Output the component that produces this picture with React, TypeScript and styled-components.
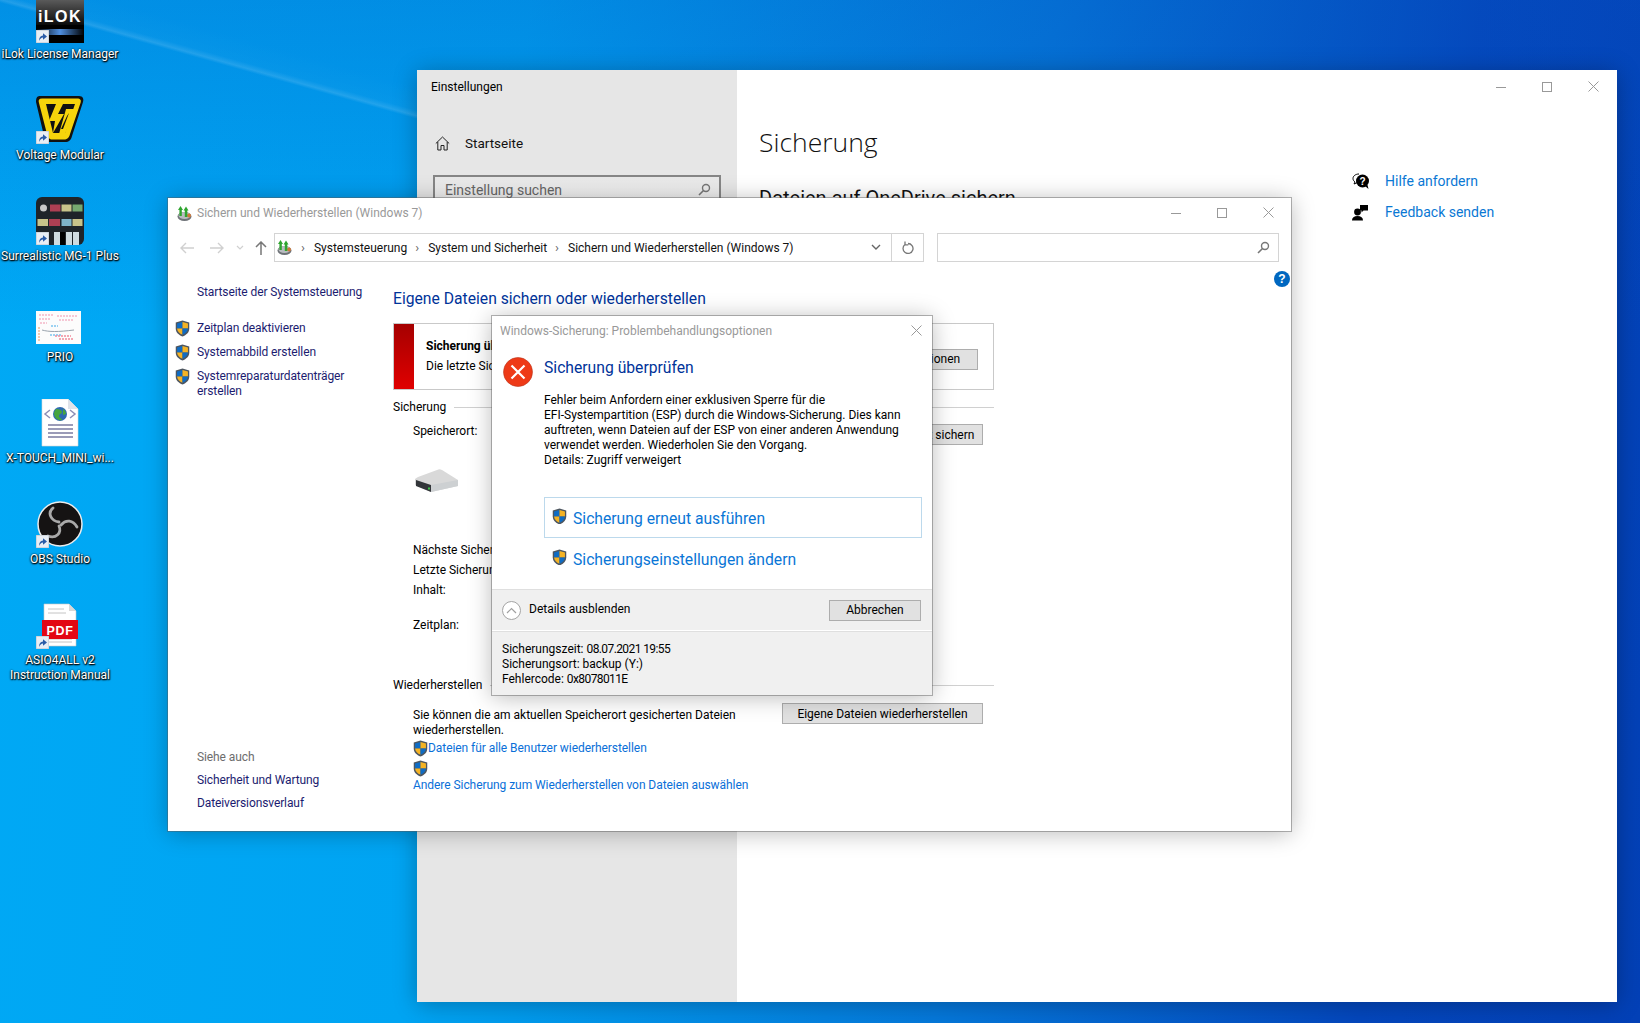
import React from "react";
import styled, { createGlobalStyle } from "styled-components";

const UI_FONT = `Roboto, "Noto Sans", "Liberation Sans", sans-serif`;

const GlobalStyle = createGlobalStyle`
  html, body {
    margin: 0;
    padding: 0;
    height: 100%;
    overflow: hidden;
  }
  body {
    font-family: ${UI_FONT};
    font-size: 12px;
    color: #000;
  }
  * { box-sizing: border-box; }
`;

/* ---------- small drawings ---------- */

const Shield = ({ size = 15 }: { size?: number }) => (
  <svg width={size} height={size * 1.13} viewBox="0 0 16 18">
    <path d="M8 .5 15.2 2.6V9c0 4.2-3.2 7-7.2 8.5C4 16 .8 13.200.8 9V2.600Z" fill="#4d5660" />
    <path d="M8 2 8 9H2.200V3.700Z" fill="#0f6cc4" />
    <path d="M8 2 13.800 3.700V9H8Z" fill="#f5b324" />
    <path d="M8 9H2.200C2.400 12 4.800 14.500 8 15.800Z" fill="#f5b324" />
    <path d="M8 9h5.800C13.600 12 11.200 14.500 8 15.800Z" fill="#0f6cc4" />
  </svg>
);

const BackupIcon = () => (
  <svg width="17" height="17" viewBox="0 0 17 17">
    <ellipse cx="8.500" cy="11.500" rx="7" ry="4.500" fill="#6f7378" />
    <ellipse cx="8.500" cy="10.500" rx="6" ry="3.500" fill="#b9bcc0" />
    <circle cx="13" cy="10.500" r="2" fill="#d0783a" />
    <path d="M4.500 1 7 5H5.800v6H3.400V5H2ZM10 1.500l2.500 4h-1.200V12H8.800V5.500H7.500Z" fill="#2fa52f" />
  </svg>
);

const ShortcutBadge = () => (
  <Badge>
    <svg width="13" height="13" viewBox="0 0 13 13">
      <rect width="13" height="13" fill="#e8eef5" stroke="#b8bfc8" />
      <path d="M3 11C3 7.500 4.500 5.800 7 5.500V3.200L11 6.500 7 9.800V7.500C5.300 7.600 4 8.800 3 11Z" fill="#2a5ca8" />
    </svg>
  </Badge>
);

const ILokIcon = () => (
  <svg width="48" height="48" viewBox="0 0 48 48">
    <defs>
      <linearGradient id="ilokTop" x1="0" x2="0" y1="0" y2="1">
        <stop offset="0" stopColor="#6a6a6a" />
        <stop offset="1" stopColor="#0a0a0a" />
      </linearGradient>
      <linearGradient id="ilokBar" x1="0" x2="1" y1="0" y2="0">
        <stop offset="0" stopColor="#000" />
        <stop offset=".5" stopColor="#4f8fe0" />
        <stop offset="1" stopColor="#000" />
      </linearGradient>
    </defs>
    <rect width="48" height="48" fill="#000" />
    <rect width="48" height="30" fill="url(#ilokTop)" />
    <text x="24" y="27" textAnchor="middle" fontFamily="Liberation Sans" fontWeight="700" fontSize="16" fill="#fff" letterSpacing="1.500">iLOK</text>
    <rect y="34" width="48" height="6" fill="url(#ilokBar)" />
  </svg>
);

const VoltageIcon = () => (
  <svg width="48" height="48" viewBox="0 0 48 48">
    <path d="M4 0H43C47 0 48 3 47 6L36 40C35 44 33 46 29 46H14C10 46 9 44 8 40L0 6C0 2 1 0 4 0Z" fill="#111" />
    <path d="M6 2.500H41C44.500 2.500 45.500 4 44.500 7L34 38C33 42 31 43.500 28 43.500H16C13 43.500 12 41 11 38L3 7C2 4 3 2.500 6 2.500Z" fill="#f6d40b" />
    <path d="M10 8H39L29 37H17Z" fill="#111" />
    <path d="M20 8 13 25H19L17 37 28 18H22L27 8Z" fill="#f6d40b" />
    <path d="M30 13H39L29 38H23Z" fill="#f6d40b" />
    <path d="M31 20 33 17 27 33 25 33Z" fill="#111" />
  </svg>
);

const MgIcon = () => (
  <svg width="48" height="48" viewBox="0 0 48 48">
    <rect width="48" height="48" rx="6" fill="#1f2429" />
    <circle cx="7.500" cy="11" r="3.500" fill="#c8c8c8" />
    <rect x="14" y="7.500" width="10.500" height="7" fill="#ad3f53" />
    <rect x="25.500" y="7.500" width="10" height="7" fill="#c8c38a" />
    <rect x="36.500" y="7.500" width="10" height="7" fill="#76a86f" />
    <rect x="1.500" y="22" width="10.500" height="7" fill="#c8c38a" />
    <rect x="13" y="22" width="11" height="7" fill="#ad3f53" />
    <rect x="25.500" y="22" width="10" height="7" fill="#7fb4c8" />
    <rect x="36.500" y="22" width="10" height="7" fill="#c8c38a" />
    <rect x="18" y="35" width="6" height="13" fill="#cfdbe0" />
    <rect x="24" y="35" width="5" height="13" fill="#000" />
    <rect x="30" y="35" width="6" height="13" fill="#cfdbe0" />
    <rect x="37" y="35" width="6" height="13" fill="#cfdbe0" />
  </svg>
);

const PrioIcon = () => (
  <svg width="48" height="48" viewBox="0 0 48 48">
    <g transform="translate(-1 7)">
      <rect x="1" y="6" width="45" height="33" fill="#fcfcfc" />
      <path d="M4 10h15M4 14h11M5 18h7M22 11h21M24 15h15" stroke="#f4b6c8" strokeWidth="1.500" strokeDasharray="2 1" />
      <path d="M7 25c7 2 16 2 32 0" stroke="#9aa3ad" fill="none" />
      <path d="M16 21h7M15 30h12" stroke="#7cc4ee" strokeWidth="1.500" strokeDasharray="2 1" />
      <path d="M20 31h16M24 34h14" stroke="#f08a9c" strokeWidth="1.500" strokeDasharray="2 1" />
      <path d="M4 22v14" stroke="#f3cbb0" strokeWidth="2" strokeDasharray="2 1" />
    </g>
  </svg>
);

const HtmlIcon = () => (
  <svg width="48" height="48" viewBox="1 0 48 48">
    <path d="M7 0H33L43 10V47H7Z" fill="#fff" stroke="#d8d8d8" strokeWidth=".6" />
    <path d="M33 0V10H43Z" fill="#dfe3ea" />
    <circle cx="25" cy="15" r="7" fill="#2f6bb0" />
    <path d="M21 10c3 0 6 1 6 3s-3 2-3 4 3 2 3 4c-3 1-7-1-8-6 0-2 1-4 2-5ZM28 10c2 1 3 3 3 5l-3 1Z" fill="#46a53f" />
    <path d="M15 11 10 15l5 4M35 11l5 4-5 4" fill="none" stroke="#8d8fb5" strokeWidth="1.500" />
    <path d="M13 26h25M13 30h25M13 34h25M13 38h25" stroke="#9a9bb8" strokeWidth="2" />
  </svg>
);

const ObsIcon = () => (
  <svg width="48" height="48" viewBox="0 0 48 48">
    <circle cx="24" cy="24" r="22" fill="#151313" stroke="#ececec" strokeWidth="1.500" />
    <g fill="none" stroke="#a9a9a9" strokeLinecap="round">
      <path d="M17 8C11 13 15 21 23 22" strokeWidth="2.800" />
      <path d="M41 27C37 20 30 19 25 25" strokeWidth="2.800" />
      <path d="M12 36C20 39 26 33 23 26" strokeWidth="2.800" />
    </g>
  </svg>
);

const PdfIcon = () => (
  <svg width="48" height="48" viewBox="0 0 48 48">
    <g transform="translate(0 3)">
      <path d="M8 0H33L40 7V42H8Z" fill="#fff" stroke="#c8c8c8" strokeWidth=".6" />
      <path d="M33 0V7H40Z" fill="#d8d8d8" />
      <path d="M12 5H28M12 9H30M12 38H36M12 35H36" stroke="#c4c4c4" />
      <rect x="6" y="16" width="36" height="19" fill="#e30613" />
      <text x="24" y="30.500" textAnchor="middle" fontFamily="Liberation Sans" fontWeight="700" fontSize="12.500" fill="#fff" letterSpacing=".6">PDF</text>
    </g>
  </svg>
);

const DriveIcon = () => (
  <svg width="44" height="24" viewBox="0 0 44 24">
    <path d="M0 10 3 8 22 1C24 0 25 0 27 1L43 11V17L16 23 0 16Z" fill="#d9d9d9" />
    <path d="M1 11 16 16V23L1 17Z" fill="#33363a" />
    <path d="M16 16 43 11V17L16 23Z" fill="#cdd0d2" />
    <rect x="13" y="18.500" width="2" height="2" fill="#3fc44a" />
  </svg>
);

const ErrorIcon = () => (
  <svg width="30" height="30" viewBox="0 0 30 30">
    <circle cx="15" cy="15" r="14.500" fill="#ee3a17" stroke="#b9361f" strokeWidth=".6" />
    <path d="M8.500 8.500 21.500 21.500M21.500 8.500 8.500 21.500" stroke="#fff" strokeWidth="2.200" />
  </svg>
);

const CloseGlyph = () => (
  <svg width="11" height="11" viewBox="0 0 11 11">
    <path d="M.5.5 10.500 10.500M10.500.5.5 10.500" stroke="#999" fill="none" />
  </svg>
);

const MaxGlyph = () => (
  <svg width="10" height="10" viewBox="0 0 10 10">
    <rect x=".5" y=".5" width="9" height="9" stroke="#999" fill="none" />
  </svg>
);

const MinGlyph = () => (
  <svg width="10" height="10" viewBox="0 0 10 10">
    <path d="M0 5.500H10" stroke="#999" />
  </svg>
);

const SearchGlyph = ({ color }: { color: string }) => (
  <svg width="13" height="13" viewBox="0 0 13 13">
    <circle cx="8" cy="5" r="3.500" fill="none" stroke={color} strokeWidth="1.400" />
    <path d="M5.500 7.500 1 12" stroke={color} strokeWidth="1.600" />
  </svg>
);

const HomeGlyph = () => (
  <svg width="15" height="15" viewBox="0 0 15 15">
    <path d="M.8 7.500 7.500 1 14.200 7.500M2.800 6V14H6V9.500H9V14H12.200V6" fill="none" stroke="#222" />
  </svg>
);

const HelpChatGlyph = () => (
  <svg width="18" height="17" viewBox="0 0 18 17">
    <path d="M7 1C3.500 1 1 3 1 5.500 1 7 1.800 8 3 9L2 11l3-1.300" fill="#fff" stroke="#000" />
    <circle cx="10.500" cy="8" r="6.500" fill="#000" />
    <path d="M13 13l3.500 3-1-4Z" fill="#000" />
    <text x="10.500" y="11.500" textAnchor="middle" fontFamily="Liberation Sans" fontWeight="700" fontSize="10" fill="#fff">?</text>
  </svg>
);

const FeedbackGlyph = () => (
  <svg width="16" height="17" viewBox="0 0 16 17">
    <circle cx="5.500" cy="8" r="3.400" fill="#000" />
    <path d="M0 16.500C0 13.500 2 12 5.500 12S11 13.500 11 16.500Z" fill="#000" />
    <path d="M8 1H16V6.500H11.500L9.500 8.500V6.500H8Z" fill="#000" />
  </svg>
);

/* ---------- desktop ---------- */

const Desktop = styled.div`
  position: relative;
  width: 1640px;
  height: 1023px;
  overflow: hidden;
  background:
    linear-gradient(15.6deg, transparent 51.5%, rgba(255, 255, 255, 0.13) 52.8%, rgba(255, 255, 255, 0.02) 55%, transparent 65%) 0 0 / 420px 130px no-repeat,
    linear-gradient(180deg, rgba(5, 80, 190, 0.28) 0%, rgba(5, 80, 190, 0) 32%),
    linear-gradient(97deg, #00a9f5 0%, #00a4f2 30%, #0578da 60%, #0447bd 84%, #0340b6 100%);
`;

const IconColumn = styled.div`
  display: flex;
  flex-direction: column;
  width: 120px;
  margin-top: -5px;
`;

const IconCell = styled.div`
  height: 101px;
  display: flex;
  flex-direction: column;
  align-items: center;
`;

const IconArt = styled.div`
  position: relative;
  width: 48px;
  height: 48px;
  svg {
    display: block;
  }
`;

const Badge = styled.div`
  position: absolute;
  left: 0;
  bottom: 0;
  width: 13px;
  height: 13px;
`;

const IconLabel = styled.div`
  margin-top: 4px;
  color: #fff;
  font-size: 12px;
  line-height: 15px;
  text-align: center;
  white-space: nowrap;
  text-shadow: 0 1px 2px #000, 1px 1px 1px rgba(0, 0, 0, 0.8), 0 0 2px rgba(0, 0, 0, 0.8);
`;

/* ---------- windows ---------- */

const Window = styled.div<{ $x: number; $y: number; $w: number; $h: number; $z: number; $edge?: boolean }>`
  position: absolute;
  left: ${(p) => p.$x}px;
  top: ${(p) => p.$y}px;
  width: ${(p) => p.$w}px;
  height: ${(p) => p.$h}px;
  z-index: ${(p) => p.$z};
  background: #fff;
  box-shadow: ${(p) => (p.$edge ? "0 0 0 1px rgba(90, 90, 90, 0.45)," : "")} 0 2px 22px rgba(0, 0, 0, 0.28);
  overflow: hidden;
`;

const Controls = styled.div<{ $gap: number; $top: number; $right: number }>`
  position: absolute;
  top: ${(p) => p.$top}px;
  right: ${(p) => p.$right}px;
  display: flex;
  align-items: center;
  gap: ${(p) => p.$gap}px;
  svg {
    display: block;
  }
`;

/* settings window */

const SettingsBody = styled.div`
  display: flex;
  height: 100%;
`;

const SettingsNav = styled.div`
  width: 320px;
  height: 100%;
  background: #e6e6e6;
  padding: 9px 16px 0 14px;
`;

const SettingsTitle = styled.div`
  font-size: 12px;
  line-height: 16px;
`;

const HomeRow = styled.div`
  display: flex;
  align-items: center;
  gap: 15px;
  margin: 38px 0 0 4px;
  font-size: 13.5px;
  line-height: 20px;
  color: #111;
`;

const SettingsSearch = styled.div`
  margin: 22px 0 0 2px;
  height: 32px;
  border: 2px solid #868686;
  background: linear-gradient(#e8e8e8, #f2f2f2);
  display: flex;
  align-items: center;
  justify-content: space-between;
  padding: 0 8px 3px 10px;
  font-size: 14px;
  color: #666;
`;

const SettingsMain = styled.div`
  flex: 1;
  padding: 51px 0 0 22px;
  display: flex;
  gap: 0;
`;

const SettingsColumn = styled.div`
  width: 593px;
`;

const PageTitle = styled.div`
  font-size: 26.5px;
  line-height: 42px;
  font-weight: 300;
  color: #111;
  font-family: "Open Sans", "Noto Sans", sans-serif;
`;

const SubTitle = styled.div`
  margin-top: 22px;
  font-size: 20px;
  line-height: 26px;
  color: #111;
`;

const RelatedList = styled.div`
  margin-top: 50px;
  display: flex;
  flex-direction: column;
  gap: 11px;
`;

const RelatedLink = styled.div`
  display: flex;
  align-items: center;
  font-size: 14px;
  line-height: 20px;
  color: #0a78d4;
`;

const RelatedIcon = styled.div`
  width: 33px;
  svg {
    display: block;
  }
`;

/* control panel window */

const PanelTitleBar = styled.div`
  display: flex;
  align-items: center;
  gap: 4px;
  height: 30px;
  padding: 0 0 0 8px;
  color: #999;
`;

const NavRow = styled.div`
  display: flex;
  align-items: center;
  height: 29px;
  margin-top: 5px;
  padding-left: 12px;
`;

const NavGlyph = styled.div<{ $w: number; $tone: string }>`
  width: ${(p) => p.$w}px;
  color: ${(p) => p.$tone};
  svg {
    display: block;
  }
`;

const AddressBox = styled.div`
  margin-left: 6px;
  width: 650px;
  height: 29px;
  border: 1px solid #d4d4d4;
  display: flex;
  align-items: center;
  padding-left: 1px;
  color: #111;
`;

const Crumb = styled.span`
  margin-left: 8px;
  white-space: nowrap;
  &::before {
    content: "›";
    color: #666;
    margin-right: 9px;
    font-size: 13px;
  }
`;

const AddressEnd = styled.div`
  margin-left: auto;
  display: flex;
  align-items: center;
  height: 100%;
`;

const ChevronCell = styled.div`
  width: 30px;
  display: flex;
  justify-content: center;
`;

const RefreshCell = styled.div`
  width: 32px;
  height: 100%;
  border-left: 1px solid #d4d4d4;
  display: flex;
  align-items: center;
  justify-content: center;
`;

const SearchBox = styled.div`
  margin-left: 13px;
  width: 342px;
  height: 29px;
  border: 1px solid #d4d4d4;
  display: flex;
  align-items: center;
  justify-content: flex-end;
  padding-right: 8px;
`;

const HelpDot = styled.div`
  position: absolute;
  top: 73px;
  right: 1px;
  width: 16px;
  height: 16px;
  border-radius: 50%;
  background: #0067c0;
  color: #fff;
  font: 700 12px/16px "Liberation Sans", sans-serif;
  text-align: center;
`;

const PanelBody = styled.div`
  display: grid;
  grid-template-columns: 225px 1fr;
`;

const SideNav = styled.div`
  padding: 23px 0 0 7px;
  color: #1c1c70;
  line-height: 15px;
  letter-spacing: -0.1px;
`;

const SideText = styled.div`
  margin-left: 22px;
`;

const SideTask = styled.div<{ $top: number }>`
  display: flex;
  align-items: flex-start;
  gap: 7px;
  margin-top: ${(p) => p.$top}px;
  svg {
    display: block;
    flex: none;
    margin-top: -1px;
  }
`;

const SideGroup = styled.div<{ $top: number; $muted?: boolean }>`
  margin: ${(p) => p.$top}px 0 0 22px;
  color: ${(p) => (p.$muted ? "#6d6d6d" : "#1c1c70")};
`;

const MainPane = styled.div`
  padding: 27px 0 0 0;
  width: 601px;
`;

const MainHeading = styled.div`
  color: #003399;
  font-size: 15.7px;
  line-height: 20px;
`;

const AlertBox = styled.div`
  margin-top: 14px;
  height: 67px;
  border: 1px solid #c9c9c9;
  display: flex;
  align-items: stretch;
`;

const AlertStripe = styled.div`
  width: 20px;
  background: linear-gradient(#a50000, #e00000);
`;

const AlertText = styled.div`
  padding: 12px 0 0 12px;
  line-height: 20px;
  flex: 1;
`;

const AlertTitle = styled.div`
  font-weight: 700;
`;

const GreyButton = styled.button<{ $w: number; $top?: number }>`
  width: ${(p) => p.$w}px;
  height: 21px;
  margin-top: ${(p) => p.$top ?? 0}px;
  padding: 0;
  border: 1px solid #adadad;
  background: #e1e1e1;
  color: #000;
  font: inherit;
  line-height: 18px;
`;

const AlertAction = styled.div`
  align-self: center;
  padding-right: 15px;
`;

const SectionHead = styled.div<{ $top: number }>`
  margin-top: ${(p) => p.$top}px;
  display: flex;
  align-items: center;
  gap: 8px;
  line-height: 16px;
  &::after {
    content: "";
    flex: 1;
    border-top: 1px solid #d0d0d0;
  }
`;

const SectionRow = styled.div`
  display: flex;
  justify-content: space-between;
  align-items: flex-start;
  padding: 8px 11px 0 20px;
  line-height: 16px;
`;

const Field = styled.div<{ $top: number }>`
  margin: ${(p) => p.$top}px 0 0 20px;
  line-height: 15px;
`;

const DriveSlot = styled.div`
  margin: 24px 0 0 22px;
  height: 27px;
  svg {
    display: block;
  }
`;

const RestoreRow = styled.div`
  display: flex;
  justify-content: space-between;
  align-items: flex-start;
  padding: 15px 11px 0 20px;
`;

const RestoreText = styled.div`
  width: 340px;
  line-height: 15px;
`;

const LinkLine = styled.div<{ $top: number }>`
  margin-top: ${(p) => p.$top}px;
  display: flex;
  align-items: center;
  color: #0a6fd8;
  line-height: 15px;
  letter-spacing: -0.06px;
  white-space: nowrap;
  svg {
    display: block;
  }
`;

const ShieldAlone = styled.div`
  margin: 3px 0 0 0;
  height: 17px;
  svg {
    display: block;
  }
`;

/* dialog */

const DialogTitle = styled.div`
  height: 30px;
  padding: 8px 0 0 8px;
  color: #999;
  line-height: 15px;
`;

const DialogHeadRow = styled.div`
  display: flex;
  gap: 11px;
  padding: 11px 0 0 11px;
  svg {
    display: block;
  }
`;

const DialogHeadText = styled.div`
  color: #003399;
  font-size: 15.7px;
  line-height: 20px;
  margin-top: 1px;
`;

const DialogText = styled.div`
  margin: 6px 0 0 52px;
  line-height: 15px;
  white-space: nowrap;
`;

const CommandLink = styled.div<{ $top: number; $framed?: boolean }>`
  margin: ${(p) => p.$top}px 10px 0 52px;
  height: 41px;
  display: flex;
  align-items: center;
  gap: 6px;
  padding-left: 7px;
  border: 1px solid ${(p) => (p.$framed ? "#bcd9ec" : "transparent")};
  color: #0a76d6;
  font-size: 15.7px;
  line-height: 21px;
  svg {
    display: block;
    margin-top: -3px;
  }
`;

const CommandLabel = styled.span`
  margin-top: 1px;
`;

const DialogFooter = styled.div`
  position: absolute;
  left: 0;
  right: 0;
  bottom: 0;
  height: 106px;
  background: #f0f0f0;
  border-top: 1px solid #dfdfdf;
`;

const FooterRow = styled.div`
  height: 41px;
  display: flex;
  align-items: center;
  padding: 0 11px 0 10px;
  border-bottom: 1px solid #fff;
  box-shadow: 0 1px 0 #dfdfdf;
  gap: 8px;
`;

const ChevronCircle = styled.div`
  width: 19px;
  height: 19px;
  border-radius: 50%;
  border: 1px solid #a4a4a4;
  background: #fff;
  display: flex;
  align-items: center;
  justify-content: center;
  svg {
    display: block;
  }
`;

const FooterLabel = styled.span`
  margin-top: -2px;
`;

const FooterAction = styled.div`
  margin-left: auto;
`;

const FooterDetails = styled.div`
  padding: 11px 0 0 10px;
  line-height: 15px;
`;

const Digits = styled.span`
  letter-spacing: -0.6px;
`;

const desktopIcons = [
  { art: <ILokIcon />, name: "iLok License Manager", link: true },
  { art: <VoltageIcon />, name: "Voltage Modular", link: true },
  { art: <MgIcon />, name: "Surrealistic MG-1 Plus", link: true },
  { art: <PrioIcon />, name: "PRIO", link: false },
  { art: <HtmlIcon />, name: "X-TOUCH_MINI_wi...", link: false },
  { art: <ObsIcon />, name: "OBS Studio", link: true },
  { art: <PdfIcon />, name: "ASIO4ALL v2\nInstruction Manual", link: true },
];

const WindowButtons = ({ gap, top, right }: { gap: number; top: number; right: number }) => (
  <Controls $gap={gap} $top={top} $right={right}>
    <MinGlyph />
    <MaxGlyph />
    <CloseGlyph />
  </Controls>
);

const App = () => {
  return (
    <Desktop>
      <GlobalStyle />

      <IconColumn>
        {desktopIcons.map((icon) => (
          <IconCell key={icon.name}>
            <IconArt>
              {icon.art}
              {icon.link && <ShortcutBadge />}
            </IconArt>
            <IconLabel>
              {icon.name.split("\n").map((line) => (
                <div key={line}>{line}</div>
              ))}
            </IconLabel>
          </IconCell>
        ))}
      </IconColumn>

      <Window $x={417} $y={70} $w={1200} $h={932} $z={1}>
        <WindowButtons gap={36} top={11} right={18} />
        <SettingsBody>
          <SettingsNav>
            <SettingsTitle>Einstellungen</SettingsTitle>
            <HomeRow>
              <HomeGlyph />
              Startseite
            </HomeRow>
            <SettingsSearch>
              Einstellung suchen
              <SearchGlyph color="#777" />
            </SettingsSearch>
          </SettingsNav>
          <SettingsMain>
            <SettingsColumn>
              <PageTitle>Sicherung</PageTitle>
              <SubTitle>Dateien auf OneDrive sichern</SubTitle>
            </SettingsColumn>
            <RelatedList>
              <RelatedLink>
                <RelatedIcon>
                  <HelpChatGlyph />
                </RelatedIcon>
                Hilfe anfordern
              </RelatedLink>
              <RelatedLink>
                <RelatedIcon>
                  <FeedbackGlyph />
                </RelatedIcon>
                Feedback senden
              </RelatedLink>
            </RelatedList>
          </SettingsMain>
        </SettingsBody>
      </Window>

      <Window $x={168} $y={198} $w={1123} $h={633} $z={2} $edge>
        <WindowButtons gap={36} top={9} right={17} />
        <HelpDot>?</HelpDot>
        <PanelTitleBar>
          <BackupIcon />
          Sichern und Wiederherstellen (Windows 7)
        </PanelTitleBar>
        <NavRow>
          <NavGlyph $w={30} $tone="#d0d0d0">
            <svg width="14" height="12" viewBox="0 0 14 12">
              <path d="M6 1 1 6l5 5M1 6h13" fill="none" stroke="currentColor" strokeWidth="1.400" />
            </svg>
          </NavGlyph>
          <NavGlyph $w={26} $tone="#d0d0d0">
            <svg width="14" height="12" viewBox="0 0 14 12">
              <path d="M8 1l5 5-5 5M13 6H0" fill="none" stroke="currentColor" strokeWidth="1.400" />
            </svg>
          </NavGlyph>
          <NavGlyph $w={19} $tone="#d0d0d0">
            <svg width="8" height="6" viewBox="0 0 8 6">
              <path d="M1 1l3 3 3-3" fill="none" stroke="currentColor" strokeWidth="1.200" />
            </svg>
          </NavGlyph>
          <NavGlyph $w={13} $tone="#777">
            <svg width="12" height="14" viewBox="0 0 12 14">
              <path d="M1 6l5-5 5 5M6 1v13" fill="none" stroke="currentColor" strokeWidth="1.500" />
            </svg>
          </NavGlyph>
          <AddressBox>
            <BackupIcon />
            <Crumb>Systemsteuerung</Crumb>
            <Crumb>System und Sicherheit</Crumb>
            <Crumb>Sichern und Wiederherstellen (Windows 7)</Crumb>
            <AddressEnd>
              <ChevronCell>
                <svg width="10" height="7" viewBox="0 0 10 7">
                  <path d="M1 1l4 4 4-4" fill="none" stroke="#666" strokeWidth="1.400" />
                </svg>
              </ChevronCell>
              <RefreshCell>
                <svg width="12" height="13" viewBox="0 0 12 13">
                  <path d="M3 3.500a5 5 0 1 0 3-1M3 .5v3.300h3.300" fill="none" stroke="#777" strokeWidth="1.300" />
                </svg>
              </RefreshCell>
            </AddressEnd>
          </AddressBox>
          <SearchBox>
            <SearchGlyph color="#777" />
          </SearchBox>
        </NavRow>

        <PanelBody>
          <SideNav>
            <SideText>Startseite der Systemsteuerung</SideText>
            <SideTask $top={21}>
              <Shield />
              Zeitplan deaktivieren
            </SideTask>
            <SideTask $top={8}>
              <Shield />
              Systemabbild erstellen
            </SideTask>
            <SideTask $top={8}>
              <Shield />
              <div>
                Systemreparaturdatenträger
                <br />
                erstellen
              </div>
            </SideTask>
            <SideGroup $top={351} $muted>
              Siehe auch
            </SideGroup>
            <SideGroup $top={8}>Sicherheit und Wartung</SideGroup>
            <SideGroup $top={8}>Dateiversionsverlauf</SideGroup>
          </SideNav>

          <MainPane>
            <MainHeading>Eigene Dateien sichern oder wiederherstellen</MainHeading>
            <AlertBox>
              <AlertStripe />
              <AlertText>
                <AlertTitle>Sicherung überprüfen</AlertTitle>
                <div>Die letzte Sicherung wurde nicht abgeschlossen.</div>
              </AlertText>
              <AlertAction>
                <GreyButton $w={84} $top={5}>
                  Optionen
                </GreyButton>
              </AlertAction>
            </AlertBox>
            <SectionHead $top={9}>Sicherung</SectionHead>
            <SectionRow>
              <span>Speicherort:</span>
              <GreyButton $w={86} $top={1}>
                Jetzt sichern
              </GreyButton>
            </SectionRow>
            <DriveSlot>
              <DriveIcon />
            </DriveSlot>
            <Field $top={47}>Nächste Sicherung:</Field>
            <Field $top={5}>Letzte Sicherung:</Field>
            <Field $top={5}>Inhalt:</Field>
            <Field $top={20}>Zeitplan:</Field>
            <SectionHead $top={44}>Wiederherstellen</SectionHead>
            <RestoreRow>
              <RestoreText>
                Sie können die am aktuellen Speicherort gesicherten Dateien
                <br />
                wiederherstellen.
                <LinkLine $top={2}>
                  <Shield />
                  Dateien für alle Benutzer wiederherstellen
                </LinkLine>
                <ShieldAlone>
                  <Shield />
                </ShieldAlone>
                <LinkLine $top={1}>Andere Sicherung zum Wiederherstellen von Dateien auswählen</LinkLine>
              </RestoreText>
              <GreyButton $w={201} $top={-5}>
                Eigene Dateien wiederherstellen
              </GreyButton>
            </RestoreRow>
          </MainPane>
        </PanelBody>
      </Window>

      <Window $x={492} $y={316} $w={440} $h={379} $z={3} $edge>
        <Controls $gap={0} $top={9} $right={10}>
          <CloseGlyph />
        </Controls>
        <DialogTitle>Windows-Sicherung: Problembehandlungsoptionen</DialogTitle>
        <DialogHeadRow>
          <ErrorIcon />
          <DialogHeadText>Sicherung überprüfen</DialogHeadText>
        </DialogHeadRow>
        <DialogText>
          Fehler beim Anfordern einer exklusiven Sperre für die
          <br />
          EFI-Systempartition (ESP) durch die Windows-Sicherung. Dies kann
          <br />
          auftreten, wenn Dateien auf der ESP von einer anderen Anwendung
          <br />
          verwendet werden. Wiederholen Sie den Vorgang.
          <br />
          Details: Zugriff verweigert
        </DialogText>
        <CommandLink $top={29} $framed>
          <Shield />
          <CommandLabel>Sicherung erneut ausführen</CommandLabel>
        </CommandLink>
        <CommandLink $top={0}>
          <Shield />
          <CommandLabel>Sicherungseinstellungen ändern</CommandLabel>
        </CommandLink>
        <DialogFooter>
          <FooterRow>
            <ChevronCircle>
              <svg width="11" height="7" viewBox="0 0 11 7">
                <path d="M1 6 5.500 1.500 10 6" fill="none" stroke="#a0a0a0" strokeWidth="1.200" />
              </svg>
            </ChevronCircle>
            <FooterLabel>Details ausblenden</FooterLabel>
            <FooterAction>
              <GreyButton $w={92}>Abbrechen</GreyButton>
            </FooterAction>
          </FooterRow>
          <FooterDetails>
            Sicherungszeit: <Digits>08.07.2021 19:55</Digits>
            <br />
            Sicherungsort: backup (Y:)
            <br />
            Fehlercode: <Digits>0x8078011E</Digits>
          </FooterDetails>
        </DialogFooter>
      </Window>
    </Desktop>
  );
};

export default App;
